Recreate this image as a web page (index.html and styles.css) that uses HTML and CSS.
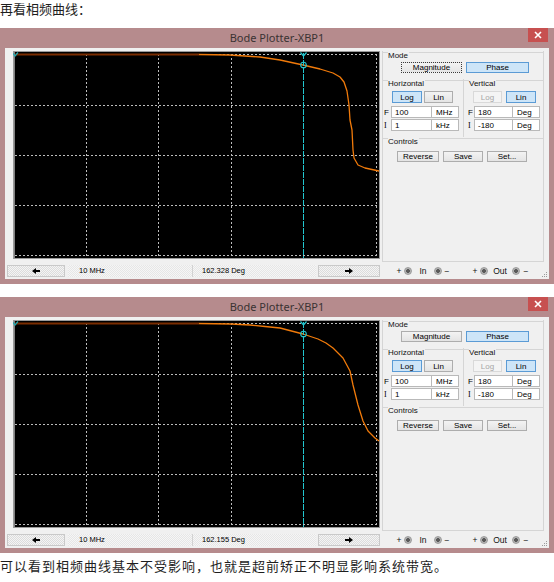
FILE: index.html
```html
<!DOCTYPE html>
<html lang="zh">
<head>
<meta charset="utf-8">
<title>Bode Plotter</title>
<link rel="stylesheet" href="styles.css">
</head>
<body>
<p class="caption caption-top">再看相频曲线：</p>

<div class="window">
  <div class="titlebar">
    <span class="title">Bode Plotter-XBP1</span>
    <span class="close"><svg width="8" height="8" viewBox="0 0 8 8"><path d="M1 1L7 7M7 1L1 7" stroke="#fff" stroke-width="1.6"/></svg></span>
  </div>
  <div class="client">
    <div class="left">
      <svg class="plot" width="367" height="208" viewBox="0 0 367 208">
        <rect width="367" height="208" fill="#000"/>
        <rect x="0.5" y="0.5" width="366" height="207" fill="none" stroke="#9a9a9a"/>
        <line x1="1.5" y1="1" x2="1.5" y2="207" stroke="#808080"/>
        <g stroke="#bdbdbd" stroke-dasharray="2 2" stroke-width="1">
          <line x1="73.5" y1="3" x2="73.5" y2="206"/>
          <line x1="145.5" y1="3" x2="145.5" y2="206"/>
          <line x1="218.5" y1="3" x2="218.5" y2="206"/>
          <line x1="363.5" y1="3" x2="363.5" y2="206"/>
          <line x1="2" y1="3.5" x2="364" y2="3.5"/>
          <line x1="2" y1="54.5" x2="364" y2="54.5"/>
          <line x1="2" y1="104.5" x2="364" y2="104.5"/>
          <line x1="2" y1="154.5" x2="364" y2="154.5"/>
          <line x1="2" y1="204.5" x2="364" y2="204.5"/>
        </g>
        <path d="M2 3.5H186" stroke="#7a2c00" stroke-width="2" fill="none"/>
        <polyline points="186,3.5 217,4 247,6 267,9 290,14 307,18 320,22 327,26 331,31 334,40 336,54 337,69 339,79 340,99 341,107 345,114 352,117 366,120" fill="none" stroke="#f07a0a" stroke-width="1.3" stroke-linejoin="round"/>
        <line x1="290.5" y1="2" x2="290.5" y2="207" stroke="#22c6cf" stroke-dasharray="6 1"/>
        <path d="M287.5 1.5L290.5 5L293.5 1.5" fill="none" stroke="#22c6cf" stroke-width="1.2"/>
        <path d="M-1 1.5L2 5L5 1.5" fill="none" stroke="#1fa9b0" stroke-width="1.2"/>
        <circle cx="290.5" cy="14" r="2.8" fill="none" stroke="#22c6cf" stroke-width="1.1"/>
      </svg>
      <div class="bottombar">
        <div class="arrowbtn arrow-l"><svg width="8" height="6" viewBox="0 0 8 6"><path d="M0 3L4 0V2H8V4H4V6Z" fill="#000"/></svg></div>
        <div class="field field-1">10 MHz</div>
        <div class="field field-2">162.328 Deg</div>
        <div class="arrowbtn arrow-r"><svg width="8" height="6" viewBox="0 0 8 6"><path d="M8 3L4 0V2H0V4H4V6Z" fill="#000"/></svg></div>
      </div>
    </div>
    <div class="right">
      <div class="panel">
        <div class="legend"><span>Mode</span></div>
        <div class="row mode-row">
          <div class="btn btn-mag focus">Magnitude</div>
          <div class="btn btn-phase sel">Phase</div>
        </div>
        <div class="axes">
          <div class="col col-h">
            <div class="legend"><span>Horizontal</span></div>
            <div class="row scale-row">
              <div class="btn b-log sel">Log</div>
              <div class="btn b-lin">Lin</div>
            </div>
            <div class="row val-row">
              <span class="lbl">F</span><span class="inp">100</span><span class="unit">MHz</span>
            </div>
            <div class="row val-row second">
              <span class="lbl serif">I</span><span class="inp">1</span><span class="unit">kHz</span>
            </div>
          </div>
          <div class="col col-v">
            <div class="legend"><span>Vertical</span></div>
            <div class="row scale-row">
              <div class="btn b-log dis">Log</div>
              <div class="btn b-lin sel">Lin</div>
            </div>
            <div class="row val-row">
              <span class="lbl">F</span><span class="inp">180</span><span class="unit">Deg</span>
            </div>
            <div class="row val-row second">
              <span class="lbl serif">I</span><span class="inp">-180</span><span class="unit">Deg</span>
            </div>
          </div>
        </div>
        <div class="legend"><span>Controls</span></div>
        <div class="row ctrl-row">
          <div class="btn b-rev">Reverse</div>
          <div class="btn b-save">Save</div>
          <div class="btn b-set">Set...</div>
        </div>
      </div>
      <div class="terminals">
        <span class="sign plus">+</span><span class="term"></span><span class="tlabel t-in">In</span><span class="term"></span><span class="sign minus">−</span>
        <span class="sign plus gap">+</span><span class="term"></span><span class="tlabel t-out">Out</span><span class="term"></span><span class="sign minus wide">−</span>
      </div>
    </div>
    <svg class="grip" width="6" height="6" viewBox="0 0 6 6"><g fill="#9a9a9a"><rect x="4" y="0" width="1" height="1"/><rect x="2" y="2" width="1" height="1"/><rect x="4" y="2" width="1" height="1"/><rect x="0" y="4" width="1" height="1"/><rect x="2" y="4" width="1" height="1"/><rect x="4" y="4" width="1" height="1"/></g></svg>
  </div>
</div>

<div class="window">
  <div class="titlebar">
    <span class="title">Bode Plotter-XBP1</span>
    <span class="close"><svg width="8" height="8" viewBox="0 0 8 8"><path d="M1 1L7 7M7 1L1 7" stroke="#fff" stroke-width="1.6"/></svg></span>
  </div>
  <div class="client">
    <div class="left">
      <svg class="plot" width="367" height="208" viewBox="0 0 367 208">
        <rect width="367" height="208" fill="#000"/>
        <rect x="0.5" y="0.5" width="366" height="207" fill="none" stroke="#9a9a9a"/>
        <line x1="1.5" y1="1" x2="1.5" y2="207" stroke="#808080"/>
        <g stroke="#bdbdbd" stroke-dasharray="2 2" stroke-width="1">
          <line x1="73.5" y1="3" x2="73.5" y2="206"/>
          <line x1="145.5" y1="3" x2="145.5" y2="206"/>
          <line x1="218.5" y1="3" x2="218.5" y2="206"/>
          <line x1="363.5" y1="3" x2="363.5" y2="206"/>
          <line x1="2" y1="3.5" x2="364" y2="3.5"/>
          <line x1="2" y1="54.5" x2="364" y2="54.5"/>
          <line x1="2" y1="104.5" x2="364" y2="104.5"/>
          <line x1="2" y1="154.5" x2="364" y2="154.5"/>
          <line x1="2" y1="204.5" x2="364" y2="204.5"/>
        </g>
        <path d="M2 3.5H186" stroke="#7a2c00" stroke-width="2" fill="none"/>
        <polyline points="186,3.5 218,4 237,5 252,6.5 267,8 290,14 305,19 313,23 320,28 330,38 337,51 340,65 345,85 350,101 355,111 362,118 366,121" fill="none" stroke="#f07a0a" stroke-width="1.3" stroke-linejoin="round"/>
        <line x1="290.5" y1="2" x2="290.5" y2="207" stroke="#22c6cf" stroke-dasharray="6 1"/>
        <path d="M287.5 1.5L290.5 5L293.5 1.5" fill="none" stroke="#22c6cf" stroke-width="1.2"/>
        <path d="M-1 1.5L2 5L5 1.5" fill="none" stroke="#1fa9b0" stroke-width="1.2"/>
        <circle cx="290.5" cy="14" r="2.8" fill="none" stroke="#22c6cf" stroke-width="1.1"/>
      </svg>
      <div class="bottombar">
        <div class="arrowbtn arrow-l"><svg width="8" height="6" viewBox="0 0 8 6"><path d="M0 3L4 0V2H8V4H4V6Z" fill="#000"/></svg></div>
        <div class="field field-1">10 MHz</div>
        <div class="field field-2">162.155 Deg</div>
        <div class="arrowbtn arrow-r"><svg width="8" height="6" viewBox="0 0 8 6"><path d="M8 3L4 0V2H0V4H4V6Z" fill="#000"/></svg></div>
      </div>
    </div>
    <div class="right">
      <div class="panel">
        <div class="legend"><span>Mode</span></div>
        <div class="row mode-row">
          <div class="btn btn-mag">Magnitude</div>
          <div class="btn btn-phase sel">Phase</div>
        </div>
        <div class="axes">
          <div class="col col-h">
            <div class="legend"><span>Horizontal</span></div>
            <div class="row scale-row">
              <div class="btn b-log sel">Log</div>
              <div class="btn b-lin">Lin</div>
            </div>
            <div class="row val-row">
              <span class="lbl">F</span><span class="inp">100</span><span class="unit">MHz</span>
            </div>
            <div class="row val-row second">
              <span class="lbl serif">I</span><span class="inp">1</span><span class="unit">kHz</span>
            </div>
          </div>
          <div class="col col-v">
            <div class="legend"><span>Vertical</span></div>
            <div class="row scale-row">
              <div class="btn b-log dis">Log</div>
              <div class="btn b-lin sel">Lin</div>
            </div>
            <div class="row val-row">
              <span class="lbl">F</span><span class="inp">180</span><span class="unit">Deg</span>
            </div>
            <div class="row val-row second">
              <span class="lbl serif">I</span><span class="inp">-180</span><span class="unit">Deg</span>
            </div>
          </div>
        </div>
        <div class="legend"><span>Controls</span></div>
        <div class="row ctrl-row">
          <div class="btn b-rev">Reverse</div>
          <div class="btn b-save">Save</div>
          <div class="btn b-set">Set...</div>
        </div>
      </div>
      <div class="terminals">
        <span class="sign plus">+</span><span class="term"></span><span class="tlabel t-in">In</span><span class="term"></span><span class="sign minus">−</span>
        <span class="sign plus gap">+</span><span class="term"></span><span class="tlabel t-out">Out</span><span class="term"></span><span class="sign minus wide">−</span>
      </div>
    </div>
    <svg class="grip" width="6" height="6" viewBox="0 0 6 6"><g fill="#9a9a9a"><rect x="4" y="0" width="1" height="1"/><rect x="2" y="2" width="1" height="1"/><rect x="4" y="2" width="1" height="1"/><rect x="0" y="4" width="1" height="1"/><rect x="2" y="4" width="1" height="1"/><rect x="4" y="4" width="1" height="1"/></g></svg>
  </div>
</div>

<p class="caption caption-bottom">可以看到相频曲线基本不受影响，也就是超前矫正不明显影响系统带宽。</p>
</body>
</html>
```

FILE: styles.css
```css
* { box-sizing: border-box; }
html, body { margin: 0; padding: 0; background: #fff; }
body {
  width: 554px;
  font-family: "Liberation Sans", Arial, sans-serif;
  color: #000;
}

.caption {
  margin: 0;
  font-family: "Noto Sans CJK SC", "Noto Sans", sans-serif;
  font-size: 13px;
  color: #1e1e1e;
  white-space: nowrap;
}
.caption-top { height: 18px; line-height: 18px; margin-bottom: 10px; }
.caption-bottom { height: 20px; line-height: 20px; margin-top: 3px; letter-spacing: 1px; }

.window {
  width: 554px;
  height: 256px;
  background: #b68b8d;
  padding: 0 5px 4px 5px;
  display: flex;
  flex-direction: column;
}
.window + .window { margin-top: 13px; }

.titlebar {
  height: 20px;
  display: grid;
  grid-template-columns: 1fr auto 1fr;
  align-items: start;
}
.title {
  grid-column: 2;
  font-family: "Noto Sans", "Liberation Sans", sans-serif;
  font-size: 11px;
  line-height: 20px;
  color: #3a3333;
}
.close {
  grid-column: 3;
  justify-self: end;
  width: 20px;
  height: 14px;
  margin-right: 1px;
  background: #c75050;
  display: flex;
  align-items: center;
  justify-content: center;
}

.client {
  height: 231px;
  background: #f0f0f0;
  display: flex;
  position: relative;
}

.left { width: 377px; padding-left: 2px; }
.plot { display: block; margin: 3px 0 0 6px; }

.bottombar { display: flex; margin-top: 6px; height: 12px; }
.arrowbtn {
  height: 12px;
  border: 1px solid #c9c9c9;
  background: repeating-conic-gradient(#dcdcdc 0 25%, #f4f4f4 0 50%) 0 0 / 2px 2px;
  display: flex;
  align-items: center;
  justify-content: center;
}
.arrow-l { width: 58px; margin-right: 3px; }
.arrow-r { width: 62px; margin-left: 2px; }
.field {
  height: 12px;
  font-size: 7.5px;
  line-height: 12px;
  background: repeating-conic-gradient(#e6e6e6 0 25%, #f6f6f6 0 50%) 0 0 / 2px 2px;
  white-space: nowrap;
}
.field-1 { width: 125px; padding-left: 11px; border-right: 1px solid #d2d2d2; }
.field-2 { width: 123px; padding-left: 9px; }

.right { width: 167px; }
.panel {
  margin-top: 3px;
  width: 162px;
  height: 211px;
  border: 1px solid #d5d5d5;
  border-top: none;
}

.legend {
  display: flex;
  align-items: flex-start;
  height: 9px;
  font-size: 8px;
  line-height: 9px;
  color: #111;
}
.legend::before {
  content: "";
  width: 5px;
  border-top: 1px solid #d5d5d5;
  margin-top: 1px;
}
.legend::after {
  content: "";
  flex: 1;
  border-top: 1px solid #d5d5d5;
  margin-top: 1px;
  margin-left: 1px;
}

.row { display: flex; }

.btn {
  display: flex;
  align-items: center;
  justify-content: center;
  font-size: 8px;
  color: #000;
  border: 1px solid #adadad;
  background: linear-gradient(#f3f3f3, #e4e4e4);
  white-space: nowrap;
}
.btn.sel { background: #cde5f8; border-color: #5b9bd5; }
.btn.dis { color: #a6a6a6; background: #f4f4f4; border-color: #d9d9d9; }
.btn.focus { border: 1px dotted #3a3a3a; }

.mode-row { margin-top: 2px; height: 11px; padding-left: 18px; gap: 4px; }
.btn-mag { width: 61px; }
.btn-phase { width: 63px; }

.axes { display: flex; margin-top: 6px; height: 58px; }
.col-h { width: 81px; border-right: 1px solid #d5d5d5; }
.col-v { width: 79px; }

.scale-row { margin-top: 3px; height: 12px; padding-left: 9px; }
.col-h .scale-row { gap: 2px; }
.col-v .scale-row { gap: 4px; }
.col-h .b-log { width: 30px; }
.col-h .b-lin { width: 29px; }
.col-v .b-log { width: 29px; }
.col-v .b-lin { width: 30px; }

.val-row { margin-top: 3px; height: 12px; font-size: 8px; }
.val-row.second { margin-top: 1px; }
.lbl { display: flex; align-items: center; font-size: 8px; }
.col-h .lbl { width: 8px; padding-left: 1px; }
.col-v .lbl { width: 10px; padding-left: 4px; }
.lbl.serif { font-family: "Liberation Serif", serif; }
.inp, .unit {
  display: flex;
  align-items: center;
  background: #fff;
  border: 1px solid #b9b9b9;
  white-space: nowrap;
}
.inp { padding-left: 3px; }
.unit { padding-left: 4px; width: 27px; border-left: none; }
.col-h .inp { width: 41px; }
.col-v .inp { width: 39px; }

.ctrl-row { margin-top: 5px; height: 11px; padding-left: 14px; gap: 4px; }
.b-rev { width: 42px; }
.b-save, .b-set { width: 40px; }

.terminals {
  display: flex;
  align-items: center;
  margin-top: 4px;
  height: 10px;
  padding-left: 14px;
  font-size: 8.5px;
  color: #111;
}
.sign { width: 6px; text-align: center; }
.sign.gap { margin-left: 20px; }
.minus { width: 10px; }
.minus.wide { width: 12px; }
.term {
  width: 8px;
  height: 8px;
  margin-left: 2px;
  border-radius: 50%;
  border: 1px solid #9c9c9c;
  background: radial-gradient(circle, #5a5a5a 0 1.6px, #b4b4b4 2.2px 100%);
}
.tlabel + .term { margin-left: 0; }
.tlabel { text-align: center; }
.t-in { width: 22px; }
.t-out { width: 24px; }

.grip { position: absolute; right: 1px; bottom: 1px; }
```
